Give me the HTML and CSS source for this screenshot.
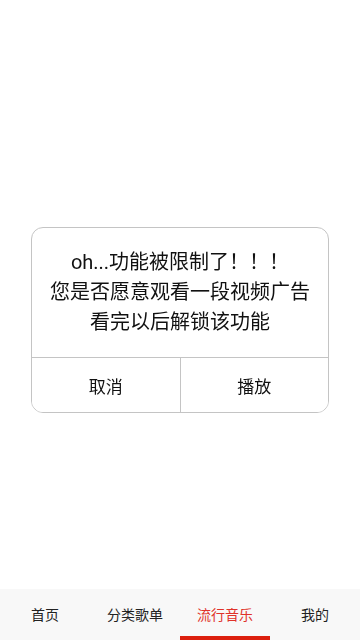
FILE: index.html
```html
<!DOCTYPE html>
<html lang="zh-CN">
<head>
<meta charset="utf-8">
<meta name="viewport" content="width=device-width, initial-scale=1">
<title>流行音乐</title>
<link rel="stylesheet" href="styles.css">
</head>
<body>
<div class="app">
  <main class="content"></main>
  <nav class="tabbar">
    <div class="tab">首页</div>
    <div class="tab">分类歌单</div>
    <div class="tab active">流行音乐</div>
    <div class="tab">我的</div>
  </nav>
</div>
<div class="overlay">
  <div class="dialog">
    <div class="dialog-body">
      <p>oh...功能被限制了！！！</p>
      <p>您是否愿意观看一段视频广告</p>
      <p>看完以后解锁该功能</p>
    </div>
    <div class="dialog-actions">
      <button class="btn">取消</button>
      <button class="btn">播放</button>
    </div>
  </div>
</div>
</body>
</html>
```
FILE: styles.css
```css
* { box-sizing: border-box; }
html, body { margin: 0; padding: 0; }
body {
  width: 360px;
  height: 640px;
  background: #fff;
  font-family: Roboto, "Noto Sans CJK SC", sans-serif;
  color: #222;
  overflow: hidden;
}
.app {
  height: 640px;
  display: flex;
  flex-direction: column;
}
.content { flex: 1; }
.tabbar {
  height: 51px;
  background: #f8f8f8;
  display: flex;
}
.tab {
  flex: 1;
  display: flex;
  align-items: center;
  justify-content: center;
  font-size: 14px;
  color: #222;
  padding-bottom: 2px;
  border-bottom: 4px solid transparent;
  padding-top: 4px;
}
.tab.active {
  color: #e0322a;
  border-bottom-color: #dc1f0e;
}
.overlay {
  position: fixed;
  inset: 0;
  display: flex;
  align-items: center;
  justify-content: center;
}
.dialog {
  width: 298px;
  background: #fff;
  border: 1px solid #c4c4c4;
  border-radius: 12px;
  overflow: hidden;
}
.dialog-body {
  padding: 19px 0 20px;
  text-align: center;
  font-size: 20px;
  line-height: 30px;
  color: #111;
}
.dialog-body p { margin: 0; }
.dialog-actions {
  display: flex;
  border-top: 1px solid #c4c4c4;
}
.btn {
  flex: 1;
  height: 54px;
  border: 0;
  background: #fff;
  font: inherit;
  font-size: 17px;
  color: #111;
  padding: 0;
}
.btn + .btn { border-left: 1px solid #c4c4c4; }
```
